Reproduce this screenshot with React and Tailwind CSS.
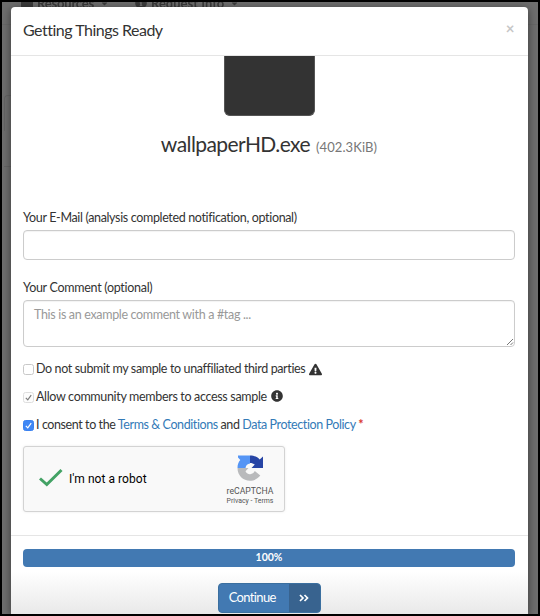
import { FaExclamationTriangle, FaInfoCircle, FaFolder, FaCaretDown } from "react-icons/fa";

function Caret() {
  return <FaCaretDown className="ml-[2px] h-[9px] w-[9px]" />;
}

function Backdrop() {
  return (
    <div className="absolute inset-0">
      <div className="absolute top-[-7px] left-[19px] flex items-center gap-[4px] text-[13px] leading-4 font-bold text-[#3b3b3b] blur-[0.4px]">
        <FaFolder className="h-3 w-3" />
        <span className="tracking-[-0.2px]">Resources</span>
        <Caret />
      </div>
      <div className="absolute top-[-7px] left-[133px] flex items-center gap-[4px] text-[13px] leading-4 font-bold text-[#3b3b3b] blur-[0.4px]">
        <FaInfoCircle className="h-3 w-3" />
        <span>Request Info</span>
        <Caret />
      </div>
      <div className="absolute top-[22px] right-0 left-0 h-px bg-[#686868]" />
      <div className="absolute top-[93px] left-[2px] h-9 w-3 rounded-tl-sm border-t border-l border-[#646464]" />
      <div className="absolute top-[164px] left-[2px] h-px w-3 bg-[#646464]" />
    </div>
  );
}

function Checkbox({ state }) {
  const look =
    state === "on"
      ? "border-[#3b82f0] bg-[#3f87f5] text-white"
      : state === "disabled"
        ? "border-[#dedede] bg-[#fcfcfc] text-[#7c7c7c]"
        : "border-[#c8c8c8] bg-white text-transparent";
  return (
    <span className={`mr-[2px] flex h-[11px] w-[11px] shrink-0 items-center justify-center rounded-[2.5px] border ${look}`}>
      <svg viewBox="0 0 10 10" className="h-[9px] w-[9px] shrink-0">
        <path d="M2 5.5 4.2 7.7 8 2.3" fill="none" stroke="currentColor" strokeWidth="1.3" />
      </svg>
    </span>
  );
}

function Recaptcha() {
  return (
    <div className="mt-[7px] flex h-[66px] w-[262px] items-center rounded-[3px] border border-[#d3d3d3] bg-[#f9f9f9] shadow-[0_0_3px_rgba(0,0,0,0.08)]">
      <svg viewBox="0 0 26 20" className="-mt-[3px] ml-[14px] h-5 w-[26px] shrink-0">
        <path d="M2 10.5 8.8 16.5 23.5 2" fill="none" stroke="#43a265" strokeWidth="3" />
      </svg>
      <span className="ml-[5px] font-[Roboto,sans-serif] text-[12px] leading-4 tracking-[0.05px] text-black">I&apos;m not a robot</span>
      <div className="mt-[1px] mr-[10px] ml-auto flex w-[48px] flex-col items-center font-[Roboto,sans-serif] whitespace-nowrap text-[#555]">
        <svg viewBox="0 0 28 28" className="h-[28px] w-[28px]">
          <path d="M14 1.5V9.5C11.500 10 10 11 9.500 14H1.500C1.500 10.500 2.500 8 4.300 6L2 3.500V1.500Z" fill="#5595f5" />
          <path d="M14 1.500C18 1.500 21.500 3 23.700 5.500L27 2.500V14H15.500L18.800 10.600C17.500 9.500 16 9 14 9Z" fill="#2745a5" />
          <path d="M1.500 14H12.500L9.500 17.200C11 20 13 20.500 15 20C17 19.500 18 18.500 18.800 17L24.300 21.600C21.500 25 18 26.800 14 26.800C7 26.800 1.500 21.500 1.500 14Z" fill="#b9babc" />
        </svg>
        <span className="mt-[4px] text-[8.7px] leading-[10px]">reCAPTCHA</span>
        <span className="text-[6.9px] leading-[10px]">Privacy - Terms</span>
      </div>
    </div>
  );
}

export default function App() {
  return (
    <div className="relative h-[616px] w-[540px] overflow-hidden border-2 border-black bg-[#6e6e6e] font-[Lato,sans-serif] text-[#333]">
      <Backdrop />
      <div className="relative mt-[5px] ml-[9px] flex h-[607px] w-[516.5px] flex-col rounded-t-[4px] bg-white shadow-[0_2px_8px_rgba(0,0,0,0.5)]">
        <header className="flex h-[49px] shrink-0 items-center justify-between border-b border-[#e5e5e5] pr-[13px] pl-[12px]">
          <h1 className="-mt-[2px] text-[16px] leading-5 tracking-[-0.5px] whitespace-nowrap">Getting Things Ready</h1>
          <span className="-mt-[6px] text-[15px] leading-4 font-bold text-[#c6c6c6]">×</span>
        </header>

        <main className="flex h-[480px] shrink-0 flex-col border-b border-[#e5e5e5] pr-[12.5px] pl-[12px]">
          <div className="h-[60px] w-[91px] shrink-0 self-center rounded-b-[6px] border border-t-0 border-[#555] bg-[#333]" />
          <div className="mt-[14px] flex h-7 items-baseline justify-center whitespace-nowrap">
            <span className="text-[21px] leading-7 tracking-[-0.58px]">wallpaperHD.exe</span>
            <span className="ml-[6px] text-[13px] tracking-[0.1px] text-[#777]">(402.3KiB)</span>
          </div>

          <label className="mt-[52px] h-4 text-[12.5px] leading-4 whitespace-nowrap">
            <span className="tracking-[-0.35px]">Your E-Mail (analysis completed notification, optional)</span>
          </label>
          <div className="mt-[4px] h-[30px] shrink-0 rounded-[4px] border border-[#ccc] shadow-[inset_0_1px_1px_rgba(0,0,0,0.05)]" />
          <label className="mt-[20px] h-4 text-[12.5px] leading-4 whitespace-nowrap">
            <span className="tracking-[-0.29px]">Your Comment (optional)</span>
          </label>
          <div className="relative mt-[4px] h-[47px] shrink-0 rounded-[4px] border border-[#ccc] px-[10px] pt-[6px] text-[12.5px] leading-4 whitespace-nowrap text-[#999] shadow-[inset_0_1px_1px_rgba(0,0,0,0.05)]">
            <span className="tracking-[-0.33px]">This is an example comment with a #tag ...</span>
            <svg viewBox="0 0 8 8" className="absolute right-0 bottom-0 h-2 w-2">
              <path d="M1 7 7 1M4.5 7 7 4.5" stroke="#777" fill="none" />
            </svg>
          </div>

          <div className="mt-[8px] flex h-7 items-center text-[12.5px] whitespace-nowrap">
            <Checkbox state="off" />
            <span className="tracking-[-0.37px]">Do not submit my sample to unaffiliated third parties</span>
            <FaExclamationTriangle className="ml-[4px] h-[13px] w-[13px]" />
          </div>
          <div className="flex h-7 items-center text-[12.5px] whitespace-nowrap">
            <Checkbox state="disabled" />
            <span className="tracking-[-0.33px]">Allow community members to access sample</span>
            <FaInfoCircle className="-mt-[2px] ml-[4px] h-3 w-3" />
          </div>
          <div className="flex h-7 items-center text-[12.5px] whitespace-nowrap">
            <Checkbox state="on" />
            <span className="tracking-[-0.41px]">
              I consent to the <a className="text-[#337ab7]">Terms &amp; Conditions</a> and{" "}
              <a className="text-[#337ab7]">Data Protection Policy</a> <b className="text-[#d9362f]">*</b>
            </span>
          </div>

          <Recaptcha />
        </main>

        <footer className="flex grow flex-col bg-linear-to-b from-white from-45% to-[#e9e9e9] px-[12px] pt-[13px]">
          <div className="flex h-[18px] w-[492px] shrink-0 items-center justify-center rounded-[4px] bg-[#4279b2] text-[10.5px] font-bold text-white">
            100%
          </div>
          <button className="mt-[16px] flex h-[30px] w-[103px] shrink-0 self-center overflow-hidden rounded-[4px] border border-[#3b6f9f] bg-[#4279b2] text-[13px] text-white">
            <span className="flex h-full w-[70px] items-center justify-center pr-[3px] pb-px tracking-[-0.65px]">Continue</span>
            <span className="flex h-full grow items-center justify-center bg-[#38638f]">
              <svg viewBox="0 0 10 8" className="h-2 w-[10px]">
                <path d="M1 1 4 4 1 7M5.5 1 8.5 4 5.5 7" fill="none" stroke="white" strokeWidth="1.7" />
              </svg>
            </span>
          </button>
        </footer>
      </div>
    </div>
  );
}
